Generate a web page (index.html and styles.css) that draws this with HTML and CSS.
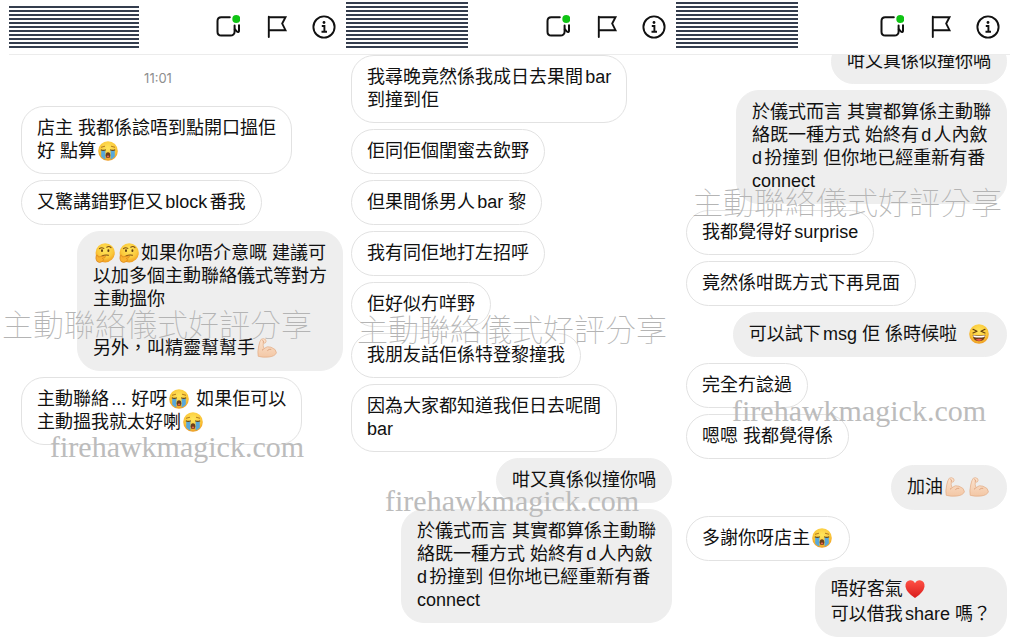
FILE: index.html
```html
<!DOCTYPE html>
<html lang="zh-Hant">
<head>
  <meta charset="UTF-8" />
  <meta name="viewport" content="width=device-width, initial-scale=1.0" />
  <title>主動聯絡儀式好評分享</title>
  <link rel="stylesheet" href="styles.css">
</head>

<body>
  <!-- SHARED ICONS -->
  <svg class="defs" aria-hidden="true">
    <defs>
      <radialGradient id="face" cx="50%" cy="35%" r="65%">
        <stop offset="0" stop-color="#ffe65c" />
        <stop offset="0.65" stop-color="#fbc83a" />
        <stop offset="1" stop-color="#ee9a22" />
      </radialGradient>
      <linearGradient id="skin" x1="0" y1="0" x2="0" y2="1">
        <stop offset="0" stop-color="#fbe3cf" />
        <stop offset="1" stop-color="#f3c7a5" />
      </linearGradient>
      <linearGradient id="red" x1="0" y1="0" x2="0" y2="1">
        <stop offset="0" stop-color="#ff5145" />
        <stop offset="1" stop-color="#d91c1c" />
      </linearGradient>
    </defs>
    <symbol id="i-video" viewBox="0 0 24 24">
      <path d="M13.800 2.200H5.200C3 2.200 1.500 3.800 1.500 6V16.800C1.500 19 3 20.600 5.200 20.600H14.500C16.700 20.600 18.600 19 18.600 16.800V10.500" fill="none" stroke="#111" stroke-width="2" stroke-linecap="round" />
      <path d="M18.800 14.200L21 16.600C21.900 17.500 23 17.100 23 16V10.200" fill="none" stroke="#111" stroke-width="2" stroke-linecap="round" />
      <circle cx="20.300" cy="4" r="5" fill="#fff" />
      <circle cx="20.300" cy="4" r="4" fill="#0fc414" />
    </symbol>
    <symbol id="i-flag" viewBox="0 0 24 24">
      <path d="M4.800 22V1.800M4.800 2.200H21.500L18.200 8.600L21.500 15.200H4.800" fill="none" stroke="#111" stroke-width="1.900" stroke-linejoin="miter" stroke-linecap="round" />
    </symbol>
    <symbol id="i-info" viewBox="0 0 24 24">
      <circle cx="12" cy="12" r="10.600" fill="none" stroke="#111" stroke-width="1.900" />
      <circle cx="12" cy="7.500" r="1.400" fill="#111" />
      <path d="M9.800 11H12.400V16.500M9.500 16.700H15" fill="none" stroke="#111" stroke-width="1.900" />
    </symbol>
    <symbol id="e-cry" viewBox="0 0 20 20">
      <circle cx="10" cy="10" r="9.800" fill="url(#face)" />
      <path d="M3 6.300L7 5.200M17 6.300L13 5.200" stroke="#a8701b" stroke-width="0.900" fill="none" />
      <path d="M3.200 9.300H7.400V18.600Q4.800 17.600 3.200 15.500Z M12.600 9.300H16.800V15.500Q15.200 17.600 12.600 18.600Z" fill="#58a8da" />
      <path d="M2.800 8.700Q5.200 10 7.800 8.700M12.200 8.700Q14.800 10 17.200 8.700" stroke="#664514" stroke-width="1.100" fill="none" />
      <ellipse cx="10" cy="14.200" rx="2.300" ry="2.900" fill="#6c3d18" />
      <ellipse cx="10" cy="15.600" rx="1.300" ry="1" fill="#e8664e" />
    </symbol>
    <symbol id="e-think" viewBox="0 0 20 20">
      <circle cx="10.200" cy="9.800" r="9.600" fill="url(#face)" />
      <ellipse cx="7" cy="7.700" rx="1" ry="1.400" fill="#5e3c13" />
      <ellipse cx="13.400" cy="7.700" rx="1" ry="1.400" fill="#5e3c13" />
      <path d="M4.500 5.600Q6.500 3.900 8.800 5.400M11.800 4.200Q14 2.600 16 4.600M7 13Q10 11.400 13.500 12.200" stroke="#7a4e16" stroke-width="1.100" fill="none" stroke-linecap="round" />
      <path d="M1.200 12.400Q2.800 11.200 3.400 14L9.500 12.900Q11.200 13.200 9.900 14.600L7.400 15.400Q9.600 16.500 7.700 18.300Q4.400 20.700 1.900 18.300Q0.300 16 1.200 12.400Z" fill="#f9b22f" stroke="#d9811b" stroke-width="0.700" />
    </symbol>
    <symbol id="e-arm" viewBox="0 0 20 20">
      <path d="M4.300 1.200Q6.500 0 8.500 1.600Q9.800 3.200 8.400 4.800Q6.900 5.700 6.300 4.700Q5.800 7.500 6.900 10.700Q10 7.600 14 9.200Q19.500 11.200 19.400 14.800Q18 18.300 12 19Q5.500 19.700 1.200 18.300Q0.300 14 1.700 8Q2.600 3.200 4.300 1.200Z" fill="url(#skin)" stroke="#e2aa83" stroke-width="0.700" />
      <path d="M6.900 10.700Q6 12 5 12.200M10.300 12.700Q12 10.800 14.300 11.300M5.300 2.300Q7 2.300 6.300 4.700" stroke="#d99b74" stroke-width="0.800" fill="none" />
    </symbol>
    <symbol id="e-laugh" viewBox="0 0 20 20">
      <circle cx="10" cy="10" r="9.800" fill="url(#face)" />
      <path d="M4 5.300L8 7.300L4 9M16 5.300L12 7.300L16 9" stroke="#66410f" stroke-width="1.200" fill="none" stroke-linejoin="round" stroke-linecap="round" />
      <path d="M3.600 10.800Q10 12.200 16.400 10.800Q15.800 17.200 10 17.300Q4.200 17.200 3.600 10.800Z" fill="#6b3a16" />
      <path d="M4.200 11.300Q10 12.600 15.800 11.300L15.500 12.900Q10 14 4.500 12.900Z" fill="#fff" />
      <path d="M6.500 15.800Q10 13.900 13.500 15.800Q10 18 6.500 15.800Z" fill="#ec5849" />
    </symbol>
    <symbol id="e-heart" viewBox="0 0 20 20">
      <path d="M10 19Q1.500 13.500 0.500 7.700Q0 2 5 1.200Q8.500 1 10 4.300Q11.500 1 15 1.200Q20 2 19.500 7.700Q18.500 13.500 10 19Z" fill="url(#red)" />
    </symbol>
  </svg>

  <main class="board">
    <!-- FIRST CHAT -->
    <section class="chat chat-one">
      <header>
        <div class="hidden-name"></div>
        <nav>
          <button type="button" aria-label="Video call"><svg><use href="#i-video" /></svg></button>
          <button type="button" aria-label="Flag"><svg><use href="#i-flag" /></svg></button>
          <button type="button" aria-label="Info"><svg><use href="#i-info" /></svg></button>
        </nav>
      </header>
      <div class="messages">
        <time>11:01</time>
        <div class="bubble">店主 我都係諗唔到點開口搵佢<br>好 點算<svg class="emoji" role="img" aria-label="crying"><use href="#e-cry" /></svg></div>
        <div class="bubble">又驚講錯野佢又block番我</div>
        <div class="bubble mine">
          <p><svg class="emoji" role="img" aria-label="thinking"><use href="#e-think" /></svg><svg class="emoji" role="img" aria-label="thinking"><use href="#e-think" /></svg>如果你唔介意嘅 建議可<br>以加多個主動聯絡儀式等對方<br>主動搵你</p>
          <p class="later">另外，叫精靈幫幫手<svg class="emoji" role="img" aria-label="strong arm"><use href="#e-arm" /></svg></p>
        </div>
        <div class="bubble">主動聯絡... 好呀<svg class="emoji" role="img" aria-label="crying"><use href="#e-cry" /></svg> 如果佢可以<br>主動搵我就太好喇<svg class="emoji" role="img" aria-label="crying"><use href="#e-cry" /></svg></div>
      </div>
      <div class="mark">主動聯絡儀式好評分享</div>
      <div class="mark-url">firehawkmagick.com</div>
    </section>

    <!-- SECOND CHAT -->
    <section class="chat chat-two">
      <header>
        <div class="hidden-name"></div>
        <nav>
          <button type="button" aria-label="Video call"><svg><use href="#i-video" /></svg></button>
          <button type="button" aria-label="Flag"><svg><use href="#i-flag" /></svg></button>
          <button type="button" aria-label="Info"><svg><use href="#i-info" /></svg></button>
        </nav>
      </header>
      <div class="messages">
        <div class="bubble">我尋晚竟然係我成日去果間bar<br>到撞到佢</div>
        <div class="bubble">佢同佢個閨蜜去飲野</div>
        <div class="bubble">但果間係男人bar 黎</div>
        <div class="bubble">我有同佢地打左招呼</div>
        <div class="bubble">佢好似冇咩野</div>
        <div class="bubble">我朋友話佢係特登黎撞我</div>
        <div class="bubble">因為大家都知道我佢日去呢間<br>bar</div>
        <div class="bubble mine">咁又真係似撞你喎</div>
        <div class="bubble mine">於儀式而言 其實都算係主動聯<br>絡既一種方式 始終有d人內斂<br>d扮撞到 但你地已經重新有番<br>connect</div>
      </div>
      <div class="mark">主動聯絡儀式好評分享</div>
      <div class="mark-url">firehawkmagick.com</div>
    </section>

    <!-- THIRD CHAT -->
    <section class="chat chat-three">
      <header>
        <div class="hidden-name"></div>
        <nav>
          <button type="button" aria-label="Video call"><svg><use href="#i-video" /></svg></button>
          <button type="button" aria-label="Flag"><svg><use href="#i-flag" /></svg></button>
          <button type="button" aria-label="Info"><svg><use href="#i-info" /></svg></button>
        </nav>
      </header>
      <div class="messages scrolled">
        <div class="bubble mine">咁又真係似撞你喎</div>
        <div class="bubble mine">於儀式而言 其實都算係主動聯<br>絡既一種方式 始終有d人內斂<br>d扮撞到 但你地已經重新有番<br>connect</div>
        <div class="bubble">我都覺得好surprise</div>
        <div class="bubble">竟然係咁既方式下再見面</div>
        <div class="bubble mine">可以試下msg 佢 係時候啦 &nbsp;<svg class="emoji" role="img" aria-label="laughing"><use href="#e-laugh" /></svg></div>
        <div class="bubble">完全冇諗過</div>
        <div class="bubble">嗯嗯 我都覺得係</div>
        <div class="bubble mine">加油<svg class="emoji" role="img" aria-label="strong arm"><use href="#e-arm" /></svg><svg class="emoji" role="img" aria-label="strong arm"><use href="#e-arm" /></svg></div>
        <div class="bubble">多謝你呀店主<svg class="emoji" role="img" aria-label="crying"><use href="#e-cry" /></svg></div>
        <div class="bubble mine">
          <p>唔好客氣<svg class="emoji" role="img" aria-label="heart"><use href="#e-heart" /></svg></p>
          <p class="next">可以借我share 嗎？</p>
        </div>
      </div>
      <div class="mark">主動聯絡儀式好評分享</div>
      <div class="mark-url">firehawkmagick.com</div>
    </section>
  </main>
</body>
</html>
```
FILE: styles.css
```css
* {
  box-sizing: border-box;
}

body {
  margin: 0;
  background: #fff;
  color: #111;
  font-family: "Liberation Sans", "Noto Sans CJK TC", sans-serif;
  font-size: 18px;
  line-height: 23px;
  text-autospace: normal;
}

p {
  margin: 0;
}

.defs {
  position: absolute;
  width: 0;
  height: 0;
}

.board {
  display: grid;
  grid-template-columns: 337fr 330fr 334fr;
  min-height: 100vh;
  padding-left: 9px;
}

.chat {
  position: relative;
  min-width: 0;
}

/* HEADER */
header {
  display: flex;
  justify-content: space-between;
  align-items: center;
  height: 55px;
  padding-right: 10px;
  border-bottom: 1px solid #ececec;
}

.hidden-name {
  align-self: flex-start;
  width: 122px;
  height: 48px;
  border-top: 2px solid #fff;
  background: repeating-linear-gradient(to top, #343d4e 0 2px, #fff 2px 4px);
}

.chat-one .hidden-name {
  width: 130px;
  border-top-width: 6px;
}

nav {
  display: flex;
  gap: 24px;
}

nav button {
  width: 24px;
  height: 24px;
  padding: 0;
  border: none;
  background: none;
  cursor: pointer;
}

nav svg {
  display: block;
  width: 24px;
  height: 24px;
  overflow: visible;
}

/* MESSAGES */
.messages {
  display: flex;
  flex-direction: column;
  align-items: flex-start;
  gap: 6px;
  padding: 0 4px 0 5px;
  overflow: hidden;
  white-space: nowrap;
}

.chat-one .messages {
  padding: 0 3px 0 12px;
}

.chat-three .messages {
  padding: 0 3px 0 10px;
}

.scrolled .bubble:first-child {
  margin-top: -16px;
}

time {
  align-self: stretch;
  padding: 2px 48px 0 0;
  color: #8e8e8e;
  font-family: Inter, sans-serif;
  font-size: 13px;
  line-height: 43px;
  text-align: center;
}

.bubble {
  padding: 10px 15px;
  border: 1px solid #e2e2e2;
  border-radius: 23px;
  background: #fff;
}

.bubble.mine {
  align-self: flex-end;
  border-color: #eee;
  background: #eee;
}

.later {
  margin-top: 26px;
}

.next {
  margin-top: 2px;
}

.emoji {
  width: 20px;
  height: 20px;
  margin: 0 2px;
  vertical-align: -4px;
}

/* WATERMARKS */
.mark,
.mark-url {
  position: absolute;
  color: #b4b4b4;
  line-height: 40px;
  white-space: nowrap;
  pointer-events: none;
}

.mark {
  font-family: "Noto Sans CJK TC", sans-serif;
  font-size: 31px;
  font-weight: 100;
}

.mark-url {
  color: #bcbcbc;
  font-family: "Liberation Serif", serif;
  font-size: 30px;
}

.chat-one .mark {
  top: 303px;
  left: -7px;
}

.chat-one .mark-url {
  top: 427px;
  left: 41px;
}

.chat-two .mark {
  top: 308px;
  left: 11px;
}

.chat-two .mark-url {
  top: 481px;
  left: 39px;
}

.chat-three .mark {
  top: 181px;
  left: 16px;
}

.chat-three .mark-url {
  top: 391px;
  left: 56px;
}
```
